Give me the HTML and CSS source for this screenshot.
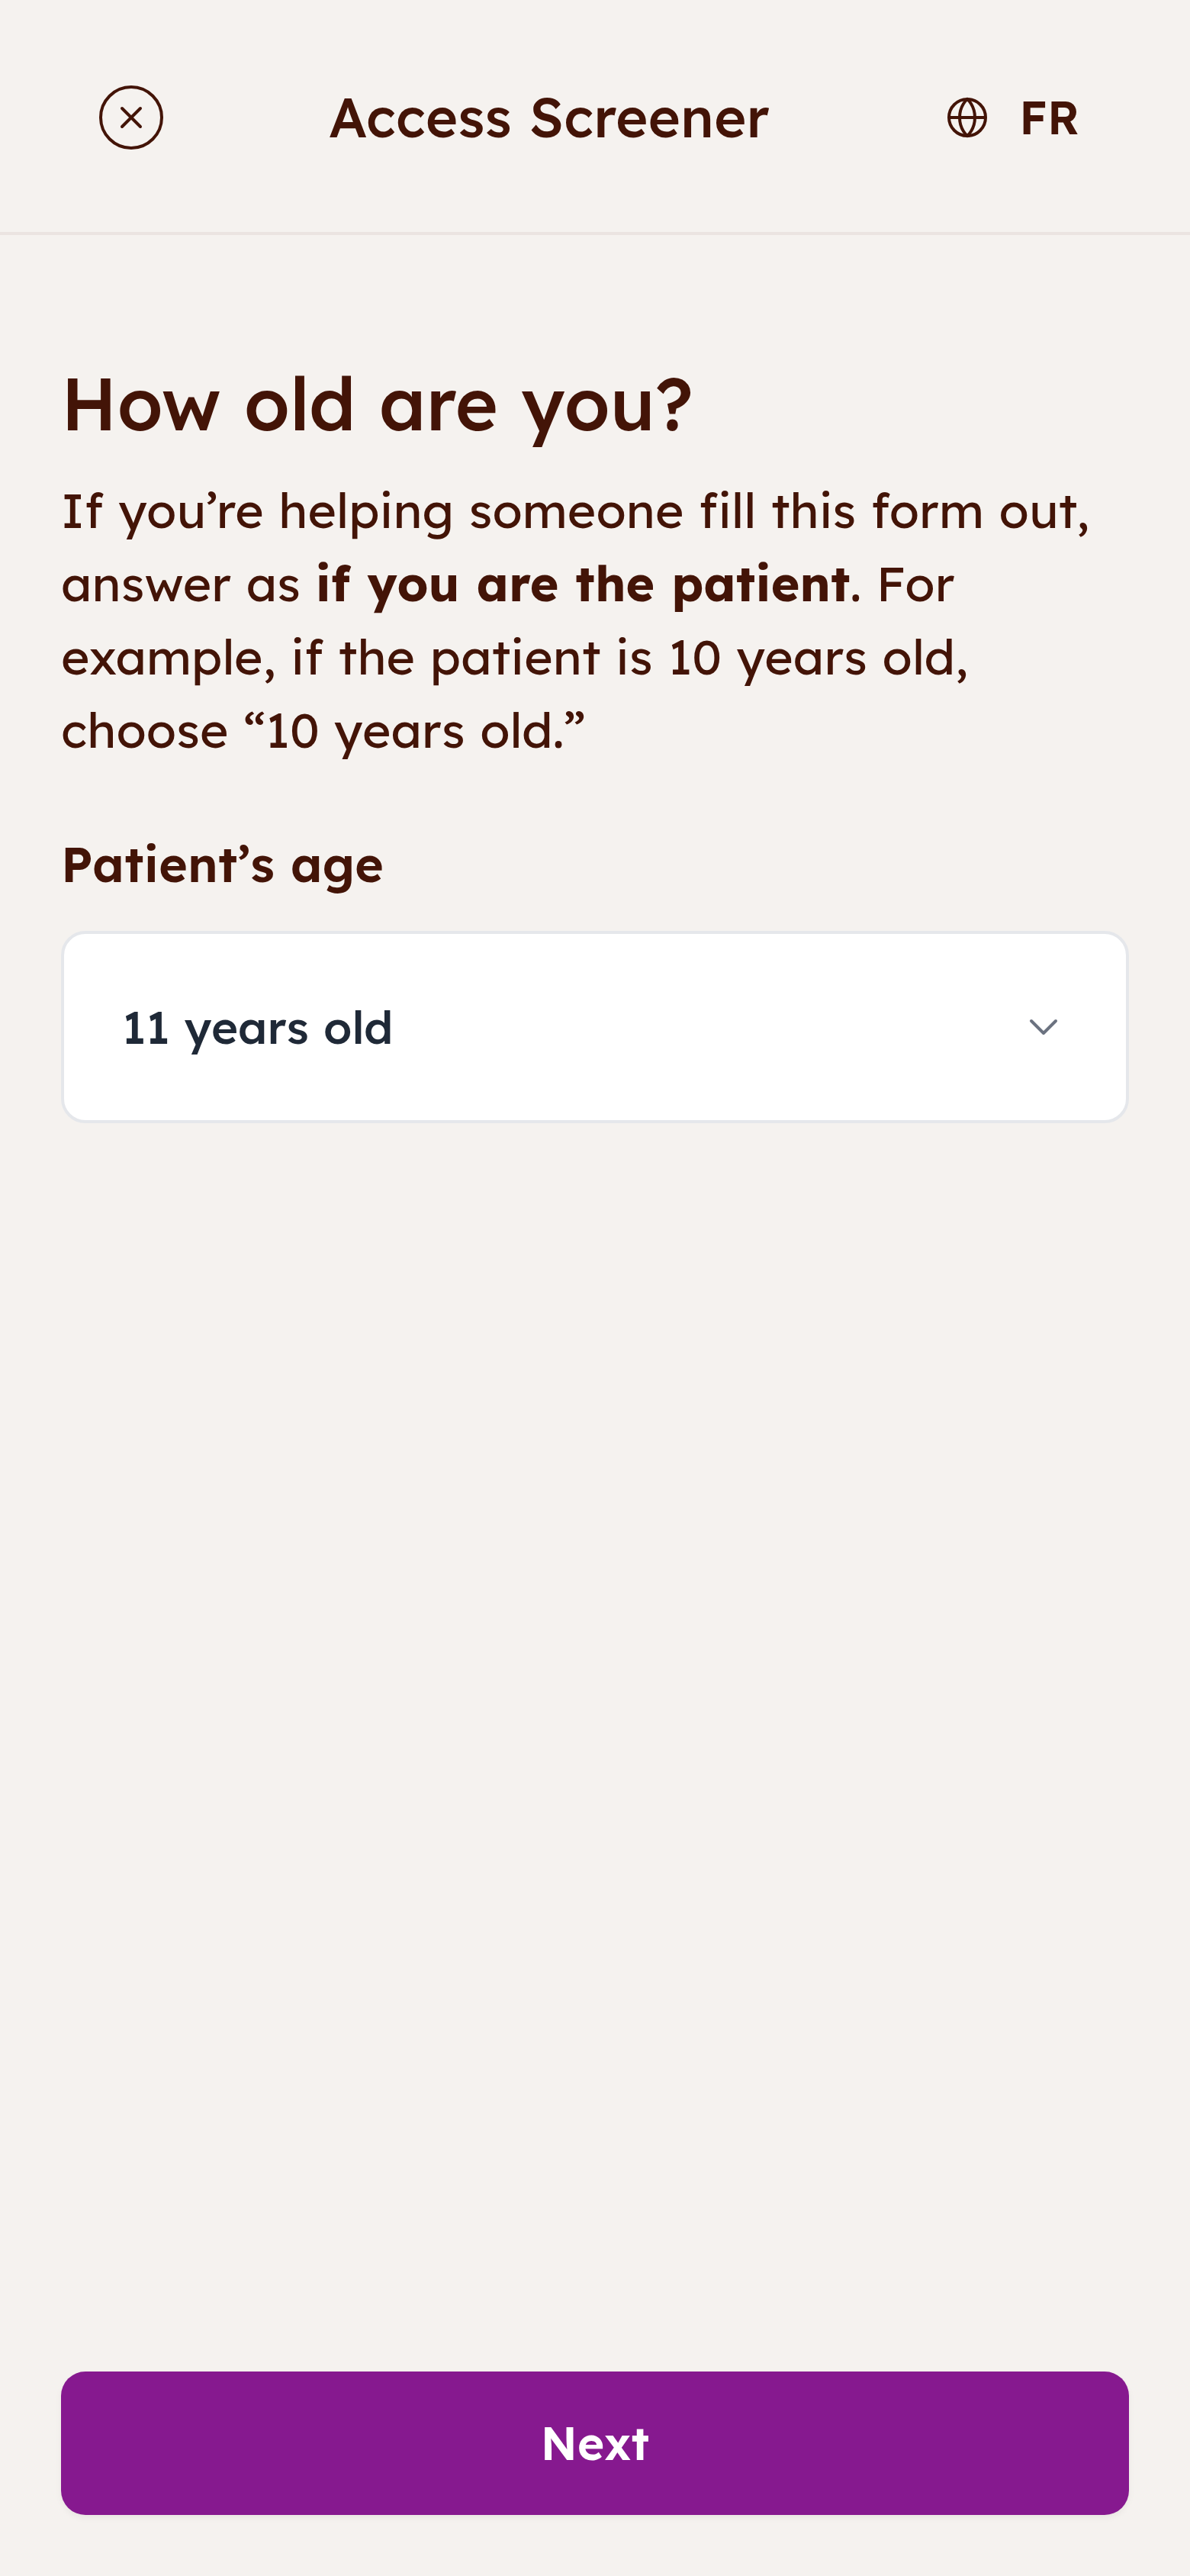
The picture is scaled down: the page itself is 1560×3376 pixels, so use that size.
FILE: index.html
```html
<!DOCTYPE html>
<html lang="en">
<head>
<meta charset="utf-8">
<title>Access Screener</title>
<link rel="stylesheet" href="styles.css">
</head>
<body>
<div class="screen">
  <header class="topbar">
    <button class="close" aria-label="Close">
      <svg width="84" height="84" viewBox="0 0 84 84" fill="none" stroke="currentColor" stroke-width="4" stroke-linecap="round"><circle cx="42" cy="42" r="40"/><path d="M30 30l24 24M54 30L30 54"/></svg>
    </button>
    <h2 class="title">Access Screener</h2>
    <button class="language">
      <svg width="64" height="64" viewBox="0 0 256 256" fill="none" stroke="currentColor" stroke-width="16"><circle cx="128" cy="128" r="96"/><path d="M168 128c0 64-40 96-40 96s-40-32-40-96 40-96 40-96 40 32 40 96ZM32 128h192"/></svg>
      <span>FR</span>
    </button>
  </header>
  <main class="content">
    <h1 class="question">How old are you?</h1>
    <p class="help">If you’re helping someone fill this form out, answer as <strong>if you are the patient</strong>. For example, if the patient is 10 years old, choose “10 years old.”</p>
    <div class="label">Patient’s age</div>
    <div class="select">
      <span>11 years old</span>
      <svg width="64" height="64" viewBox="0 0 64 64" fill="none" stroke="currentColor" stroke-width="4" stroke-linecap="round" stroke-linejoin="round"><path d="M16 24l16 16 16-16"/></svg>
    </div>
  </main>
  <footer class="actions">
    <button class="next">Next</button>
  </footer>
</div>
</body>
</html>
```

FILE: styles.css
```css
* {
  box-sizing: border-box;
}

body {
  margin: 0;
  background: #f5f2ef;
  color: #431407;
  font-family: Lexend, Inter, sans-serif;
}

h1, h2, p {
  margin: 0;
}

button {
  border: 0;
  padding: 0;
  background: none;
  color: inherit;
  font: inherit;
}

.screen {
  display: flex;
  flex-direction: column;
  width: 1560px;
  height: 3376px;
}

.topbar {
  display: grid;
  grid-template-columns: 84px 1fr auto;
  align-items: center;
  height: 308px;
  padding: 4px 145px 0 130px;
  border-bottom: 4px solid #ebe4e1;
}

.close {
  display: flex;
}

.title {
  padding: 0 0 2px 217px;
  font-size: 72px;
  font-weight: 500;
  line-height: 84px;
  letter-spacing: 0.23px;
  word-spacing: 1.6px;
  white-space: nowrap;
}

.language {
  display: flex;
  align-items: center;
  gap: 36.5px;
  font-size: 60px;
  font-weight: 600;
  line-height: 84px;
}

.content {
  flex: 1;
  padding: 160px 80px 0;
}

.question {
  font-size: 96px;
  font-weight: 500;
  line-height: 120px;
  word-spacing: 2.2px;
}

.help {
  margin-top: 32px;
  font-size: 64px;
  line-height: 96px;
  letter-spacing: 0.06px;
  word-spacing: 1.55px;
}

.help strong {
  font-weight: 700;
}

.label {
  margin-top: 80px;
  font-size: 64px;
  font-weight: 600;
  line-height: 96px;
  letter-spacing: 0.18px;
  word-spacing: 1px;
}

.select {
  display: flex;
  align-items: center;
  justify-content: space-between;
  height: 252px;
  margin-top: 40px;
  padding: 0 76px;
  border: 4px solid #e5e7eb;
  border-radius: 32px;
  background: #fff;
  color: #1f2937;
  font-size: 60px;
  font-weight: 500;
  word-spacing: 1.5px;
}

.select span {
  padding-bottom: 1px;
}

.select svg {
  color: #6b7280;
}

.actions {
  padding: 0 80px 80px;
}

.next {
  display: block;
  width: 100%;
  height: 188px;
  padding-bottom: 1px;
  border-radius: 32px;
  background: #86198f;
  box-shadow: 0 4px 8px rgba(0, 0, 0, 0.05);
  color: #fff;
  font-size: 60px;
  font-weight: 600;
}
```
